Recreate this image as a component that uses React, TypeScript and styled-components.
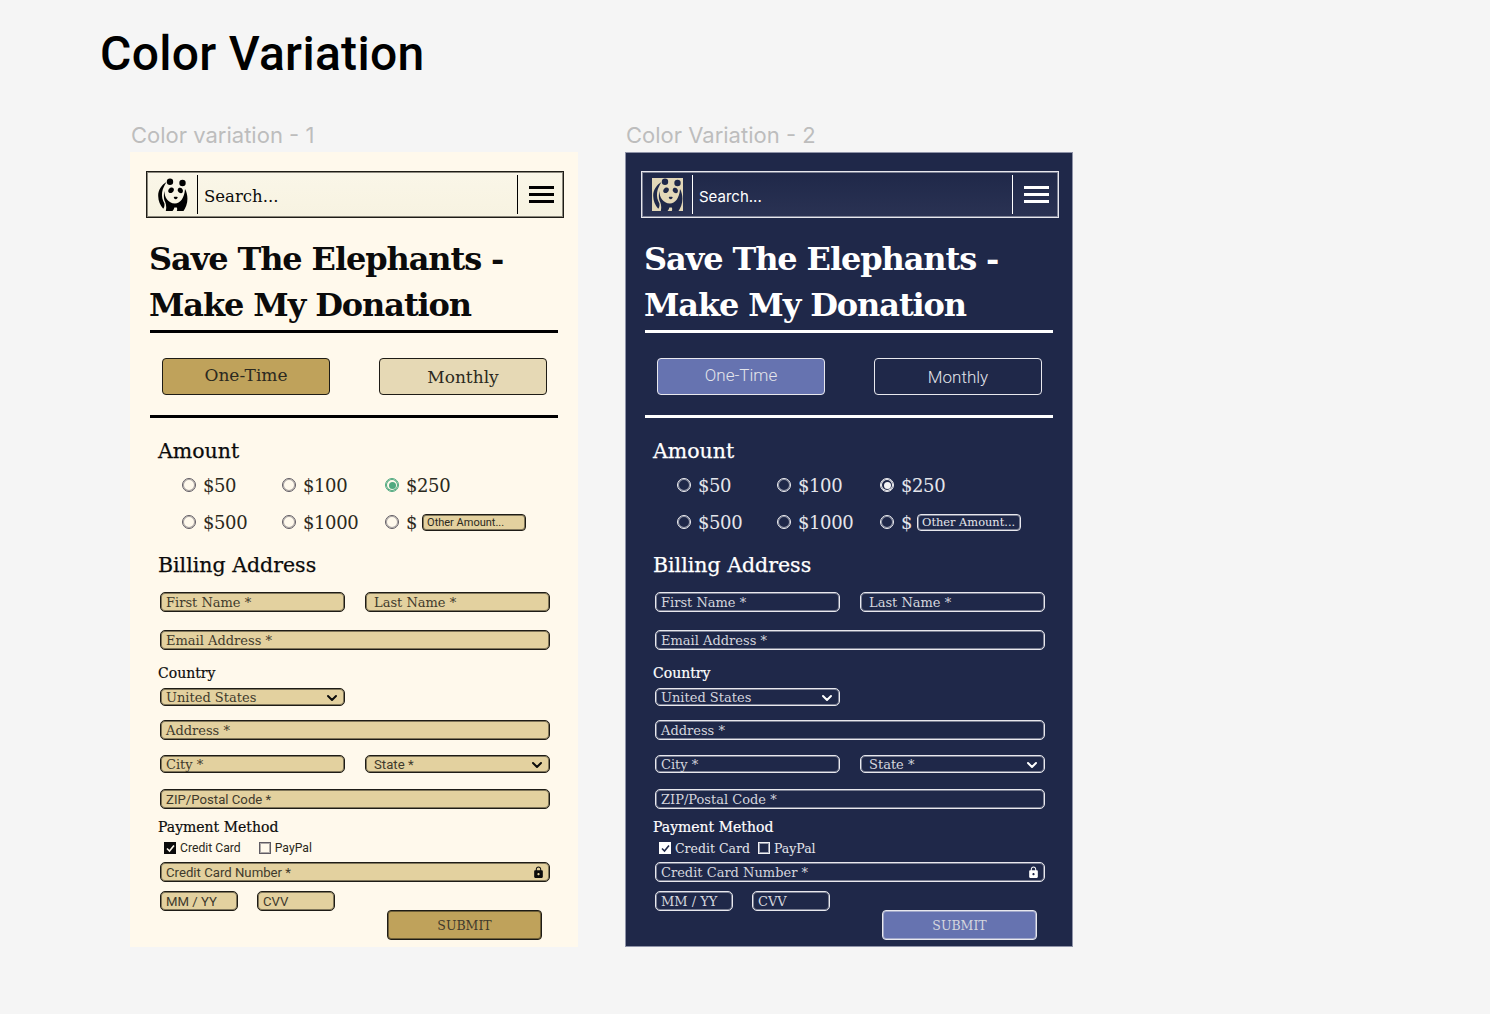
import React from 'react'
import styled, { createGlobalStyle, ThemeProvider } from 'styled-components'
import { ChevronDown } from 'lucide-react'
import { MdLock } from 'react-icons/md'

const SERIF = '"DejaVu Serif", "Liberation Serif", serif'
const ROBOTO = 'Roboto, "Liberation Sans", sans-serif'
const INTER = 'Inter, "Liberation Sans", sans-serif'

const lightTheme = {
  bg: '#FFF9EC',
  edge: 'transparent',
  text: '#0B0B0B',
  muted: '#2B2920',
  fieldText: '#3F3A2C',
  line: '#000000',
  fieldBg: '#E3D19F',
  fieldBorder: '#1E1C16',
  fieldGlow: 'rgba(30, 28, 22, 0.5)',
  active: '#BFA25B',
  idle: '#E6D9B5',
  barBg: 'linear-gradient(180deg, #FAF6E8 0%, #F7F3E1 100%)',
  radio: '#5F5B63',
  radioGlow: 'rgba(95, 91, 99, 0.5)',
  picked: '#4FA97F',
  toggleFont: SERIF,
  toggleSize: '17px',
  toggleWeight: 400,
  searchFont: SERIF,
  searchSize: '16.5px',
  altFont: ROBOTO,
  altSize: '13.2px',
  otherSize: '11px',
  checkFont: ROBOTO,
  checkSize: '12.2px',
  checkGap: '18px',
}

const darkTheme = {
  bg: '#1F2849',
  edge: '#8F93A8',
  text: '#FFFFFF',
  muted: '#E4E5EB',
  fieldText: '#D5D6DE',
  line: '#FFFFFF',
  fieldBg: 'transparent',
  fieldBorder: '#E8E8EE',
  fieldGlow: 'rgba(232, 232, 238, 0.45)',
  active: '#6673B0',
  idle: 'transparent',
  barBg: 'linear-gradient(180deg, #1F2849 0%, #2A3253 100%)',
  radio: '#F2F2F5',
  radioGlow: 'rgba(242, 242, 245, 0.55)',
  picked: '#F2F2F5',
  toggleFont: ROBOTO,
  toggleSize: '17px',
  toggleWeight: 300,
  searchFont: INTER,
  searchSize: '15px',
  altFont: SERIF,
  altSize: '13px',
  otherSize: '11.4px',
  checkFont: SERIF,
  checkSize: '12.5px',
  checkGap: '8px',
}

const GlobalStyle = createGlobalStyle`
  body {
    margin: 0;
    background: #F5F5F5;
    font-family: ${INTER};
  }
`

const Page = styled.div`
  height: 1014px;
  padding: 25px 0 0 100px;
  box-sizing: border-box;
  overflow: hidden;
`

const PageTitle = styled.h1`
  margin: 0;
  font: 500 48px/58px ${ROBOTO};
  letter-spacing: 0.3px;
  color: #000;
`

const Columns = styled.div`
  display: flex;
  gap: 47px;
  margin: 39px 0 0 30px;
`

const Caption = styled.div`
  height: 30px;
  font: 400 22px/26px ${INTER};
  color: #BDBDBD;
  margin-left: 1px;
`

const Panel = styled.div`
  width: 448px;
  height: 795px;
  box-sizing: border-box;
  padding: 19px 14px 0 16px;
  background: ${p => p.theme.bg};
  box-shadow: inset 0 0 0 1px ${p => p.theme.edge};
  color: ${p => p.theme.text};
  font-family: ${SERIF};
`

const SearchBar = styled.div`
  display: flex;
  align-items: center;
  height: 47px;
  box-sizing: border-box;
  padding: 0 1px;
  border: 1px solid ${p => p.theme.fieldBorder};
  box-shadow: inset 0 0 0 1px ${p => p.theme.fieldGlow};
  background: ${p => p.theme.barBg};
`

const LogoCell = styled.div`
  width: 49px;
  display: flex;
  justify-content: center;
  box-sizing: border-box;
`

const BarDivider = styled.div`
  width: 1px;
  height: 39px;
  background: ${p => p.theme.line};
`

const SearchText = styled.div`
  flex: 1;
  padding: 3px 0 0 6px;
  font-family: ${p => p.theme.searchFont};
  font-size: ${p => p.theme.searchSize};
`

const BurgerCell = styled.div`
  width: 44px;
  box-sizing: border-box;
  padding-left: 3px;
  display: flex;
  flex-direction: column;
  align-items: center;
  gap: 4px;
`

const BurgerLine = styled.span`
  display: block;
  width: 25px;
  height: 3px;
  background: ${p => p.theme.line};
`

const Title = styled.h2`
  margin: 18px 0 0 3px;
  font: 700 32px/46px ${SERIF};
  letter-spacing: -1.1px;
`

const Rule = styled.div<{ $top: number }>`
  width: 408px;
  height: 3px;
  margin: ${p => p.$top}px 0 0 4px;
  background: ${p => p.theme.line};
`

const ToggleRow = styled.div`
  display: flex;
  gap: 49px;
  margin: 25px 0 0 16px;
`

const Toggle = styled.div<{ $on?: boolean }>`
  width: 168px;
  height: 37px;
  box-sizing: border-box;
  display: flex;
  align-items: center;
  justify-content: center;
  padding-bottom: ${p => (p.$on ? '3px' : '0')};
  border: 1px solid ${p => p.theme.fieldBorder};
  border-radius: 4px;
  background: ${p => (p.$on ? p.theme.active : p.theme.idle)};
  font-family: ${p => p.theme.toggleFont};
  font-size: ${p => p.theme.toggleSize};
  font-weight: ${p => p.theme.toggleWeight};
  color: ${p => p.theme.muted};
`

const Section = styled.div<{ $top: number }>`
  margin: ${p => p.$top}px 0 0 12px;
  font-size: 20.5px;
  line-height: 26px;
  -webkit-text-stroke: 0.25px currentColor;
`

const RadioGrid = styled.div`
  display: grid;
  grid-template-columns: 100px 103px 1fr;
  grid-auto-rows: 24px;
  row-gap: 13px;
  margin: 9px 0 0 36px;
`

const RadioItem = styled.div`
  display: flex;
  align-items: center;
  gap: 7px;
  font-size: 18px;
  letter-spacing: -0.4px;
  color: ${p => p.theme.muted};
`

const RadioDot = styled.span<{ $on?: boolean }>`
  position: relative;
  width: 14px;
  height: 14px;
  box-sizing: border-box;
  border: 1px solid ${p => (p.$on ? p.theme.picked : p.theme.radio)};
  box-shadow: inset 0 0 0 1px ${p => (p.$on ? p.theme.picked : p.theme.radioGlow)};
  border-radius: 50%;

  &::after {
    content: '';
    display: ${p => (p.$on ? 'block' : 'none')};
    position: absolute;
    inset: 2.5px;
    border-radius: 50%;
    background: ${p => p.theme.picked};
  }
`

const OtherAmount = styled.div`
  width: 104px;
  height: 17px;
  box-sizing: border-box;
  margin-left: -2px;
  padding-left: 4px;
  border: 1px solid ${p => p.theme.fieldBorder};
  box-shadow: inset 0 0 0 1px ${p => p.theme.fieldGlow};
  border-radius: 4px;
  background: ${p => p.theme.fieldBg};
  font-family: ${p => p.theme.altFont};
  font-size: ${p => p.theme.otherSize};
  line-height: 15px;
  letter-spacing: 0;
  white-space: nowrap;
  overflow: hidden;
`

const FieldRow = styled.div<{ $top: number }>`
  display: flex;
  gap: 20px;
  margin: ${p => p.$top}px 0 0 14px;
  width: 390px;
`

const Field = styled.div<{ $w?: number; $h?: number; $alt?: boolean; $inset?: boolean }>`
  width: ${p => (p.$w ? `${p.$w}px` : '100%')};
  flex-shrink: 0;
  height: ${p => p.$h ?? 20}px;
  box-sizing: border-box;
  display: flex;
  align-items: center;
  justify-content: space-between;
  padding: 1px 4px 0 ${p => (p.$inset ? '8px' : '5px')};
  border: 1px solid ${p => p.theme.fieldBorder};
  box-shadow: inset 0 0 0 1px ${p => p.theme.fieldGlow};
  border-radius: 5px;
  background: ${p => p.theme.fieldBg};
  color: ${p => p.theme.fieldText};
  font-family: ${p => (p.$alt ? p.theme.altFont : SERIF)};
  font-size: ${p => (p.$alt ? p.theme.altSize : '13px')};
  white-space: nowrap;
`

const SmallLabel = styled.div<{ $top: number }>`
  margin: ${p => p.$top}px 0 0 12px;
  font-size: 14px;
  line-height: 18px;
  -webkit-text-stroke: 0.2px currentColor;
`

const CheckRow = styled.div`
  display: flex;
  gap: ${p => p.theme.checkGap};
  height: 20px;
  margin: 2px 0 0 18px;
  font-family: ${p => p.theme.checkFont};
  font-size: ${p => p.theme.checkSize};
  color: ${p => p.theme.muted};
`

const CheckItem = styled.div`
  display: flex;
  align-items: center;
  gap: 4px;
`

const CheckBox = styled.span<{ $on?: boolean }>`
  width: 12px;
  height: 12px;
  box-sizing: border-box;
  display: flex;
  align-items: center;
  justify-content: center;
  border: 1px solid ${p => (p.$on ? p.theme.text : p.theme.radio)};
  box-shadow: inset 0 0 0 1px ${p => (p.$on ? p.theme.text : p.theme.radioGlow)};
  background: ${p => (p.$on ? p.theme.text : 'transparent')};
  color: ${p => p.theme.bg};
`

const BottomRow = styled.div`
  display: flex;
  align-items: flex-start;
  margin: 9px 0 0 14px;
  width: 382px;
`

const SmallField = styled(Field)`
  margin-right: 19px;
`

const Submit = styled.div`
  width: 155px;
  height: 30px;
  box-sizing: border-box;
  margin: 19px 0 0 auto;
  padding-top: 1px;
  display: flex;
  align-items: center;
  justify-content: center;
  border: 1px solid ${p => p.theme.fieldBorder};
  box-shadow: inset 0 0 0 1px ${p => p.theme.fieldGlow};
  border-radius: 4px;
  background: ${p => p.theme.active};
  color: ${p => p.theme.fieldText};
  font-size: 12.5px;
`

const PandaFrame = styled.svg<{ $framed?: boolean }>`
  display: block;
  background: ${p => (p.$framed ? '#E2D7B8' : 'transparent')};
  color: ${p => (p.$framed ? '#1F2849' : '#000')};
`

const Panda: React.FC<{ framed?: boolean }> = ({ framed }) => (
  <PandaFrame $framed={framed} width="31" height="33" viewBox="0 0 31 33" fill="currentColor">
    <circle cx="13" cy="3.800" r="3.200" />
    <circle cx="25.500" cy="5" r="3.200" />
    <path d="M9.500 4C4.500 7 1 12 1.200 18c.1 5 2 9.500 5 12.800 1.200-1.400 1.500-3.300 1.200-5.300C5.400 22 4.600 18.500 5.100 14.500 5.600 10.800 7.400 7.500 9.500 4Z" />
    <path d="M7.500 12.500C7 18 10.500 25.500 18 25.500c5 0 9.500-5.500 10-14.500 2.500 4 3.300 11 1.300 16.500-.8 2.200-1.800 4-2.800 5.500H19.800c.5-1.300.5-2.500 0-3.600h-2.400c-.4 1.300-1 2.500-1.900 3.600H8.800c.8-3.500.4-6.500-.6-9C6.600 21.500 6.500 16.500 7.500 12.500Z" />
    <path d="M13.300 9.800c2-1.100 3.900.1 3.600 2.100-.3 2.100-3 3.800-4.700 2.900-1.700-.9-.9-3.800 1.100-5Z" />
    <path d="M23.300 9.800c2.100.4 3.300 2.700 2.400 4.400-.9 1.600-3.300 1.200-4.500-.6-1.200-1.800.1-4.200 2.100-3.800Z" />
    <path d="M16.800 19c1.100-.4 2.700-.4 3.800 0 .2 1.100-.8 2.300-1.900 2.300s-2.100-1.200-1.900-2.300Z" />
  </PandaFrame>
)

const Chevron = styled(ChevronDown)`
  flex-shrink: 0;
  width: 16px;
  height: 16px;
  stroke-width: 3px;
  color: ${p => p.theme.text};
`

const Lock = styled(MdLock)`
  flex-shrink: 0;
  width: 13px;
  height: 13px;
  color: ${p => p.theme.text};
`

const amounts = ['$50', '$100', '$250', '$500', '$1000']

const DonationForm: React.FC<{ framed?: boolean }> = ({ framed }) => (
  <Panel>
    <SearchBar>
      <LogoCell><Panda framed={framed} /></LogoCell>
      <BarDivider />
      <SearchText>Search...</SearchText>
      <BarDivider />
      <BurgerCell>
        <BurgerLine />
        <BurgerLine />
        <BurgerLine />
      </BurgerCell>
    </SearchBar>

    <Title>Save The Elephants -<br />Make My Donation</Title>
    <Rule $top={2} />
    <ToggleRow>
      <Toggle $on>One-Time</Toggle>
      <Toggle>Monthly</Toggle>
    </ToggleRow>
    <Rule $top={20} />

    <Section $top={20}>Amount</Section>
    <RadioGrid>
      {amounts.map(a => (
        <RadioItem key={a}>
          <RadioDot $on={a === '$250'} />
          {a}
        </RadioItem>
      ))}
      <RadioItem>
        <RadioDot />
        $
        <OtherAmount>Other Amount...</OtherAmount>
      </RadioItem>
    </RadioGrid>

    <Section $top={18}>Billing Address</Section>
    <FieldRow $top={14}>
      <Field $w={185}>First Name *</Field>
      <Field $w={185} $inset>Last Name *</Field>
    </FieldRow>
    <FieldRow $top={18}>
      <Field>Email Address *</Field>
    </FieldRow>
    <SmallLabel $top={14}>Country</SmallLabel>
    <FieldRow $top={6}>
      <Field $w={185} $h={18}>United States<Chevron /></Field>
    </FieldRow>
    <FieldRow $top={14}>
      <Field>Address *</Field>
    </FieldRow>
    <FieldRow $top={15}>
      <Field $w={185} $h={18}>City *</Field>
      <Field $w={185} $h={18} $alt $inset>State *<Chevron /></Field>
    </FieldRow>
    <FieldRow $top={16}>
      <Field $alt>ZIP/Postal Code *</Field>
    </FieldRow>

    <SmallLabel $top={9}>Payment Method</SmallLabel>
    <CheckRow>
      <CheckItem>
        <CheckBox $on>
          <svg width="9" height="9" viewBox="0 0 9 9" fill="none" stroke="currentColor" strokeWidth="1.6">
            <path d="M1 4.500 3.500 7 8 1.500" />
          </svg>
        </CheckBox>
        Credit Card
      </CheckItem>
      <CheckItem><CheckBox />PayPal</CheckItem>
    </CheckRow>
    <FieldRow $top={4}>
      <Field $alt>Credit Card Number *<Lock /></Field>
    </FieldRow>
    <BottomRow>
      <SmallField $w={78} $alt>MM / YY</SmallField>
      <SmallField $w={78} $alt>CVV</SmallField>
      <Submit>SUBMIT</Submit>
    </BottomRow>
  </Panel>
)

const App: React.FC = () => (
  <Page>
    <GlobalStyle />
    <PageTitle>Color Variation</PageTitle>
    <Columns>
      <div>
        <Caption>Color variation - 1</Caption>
        <ThemeProvider theme={lightTheme}><DonationForm /></ThemeProvider>
      </div>
      <div>
        <Caption>Color Variation - 2</Caption>
        <ThemeProvider theme={darkTheme}><DonationForm framed /></ThemeProvider>
      </div>
    </Columns>
  </Page>
)

export default App
